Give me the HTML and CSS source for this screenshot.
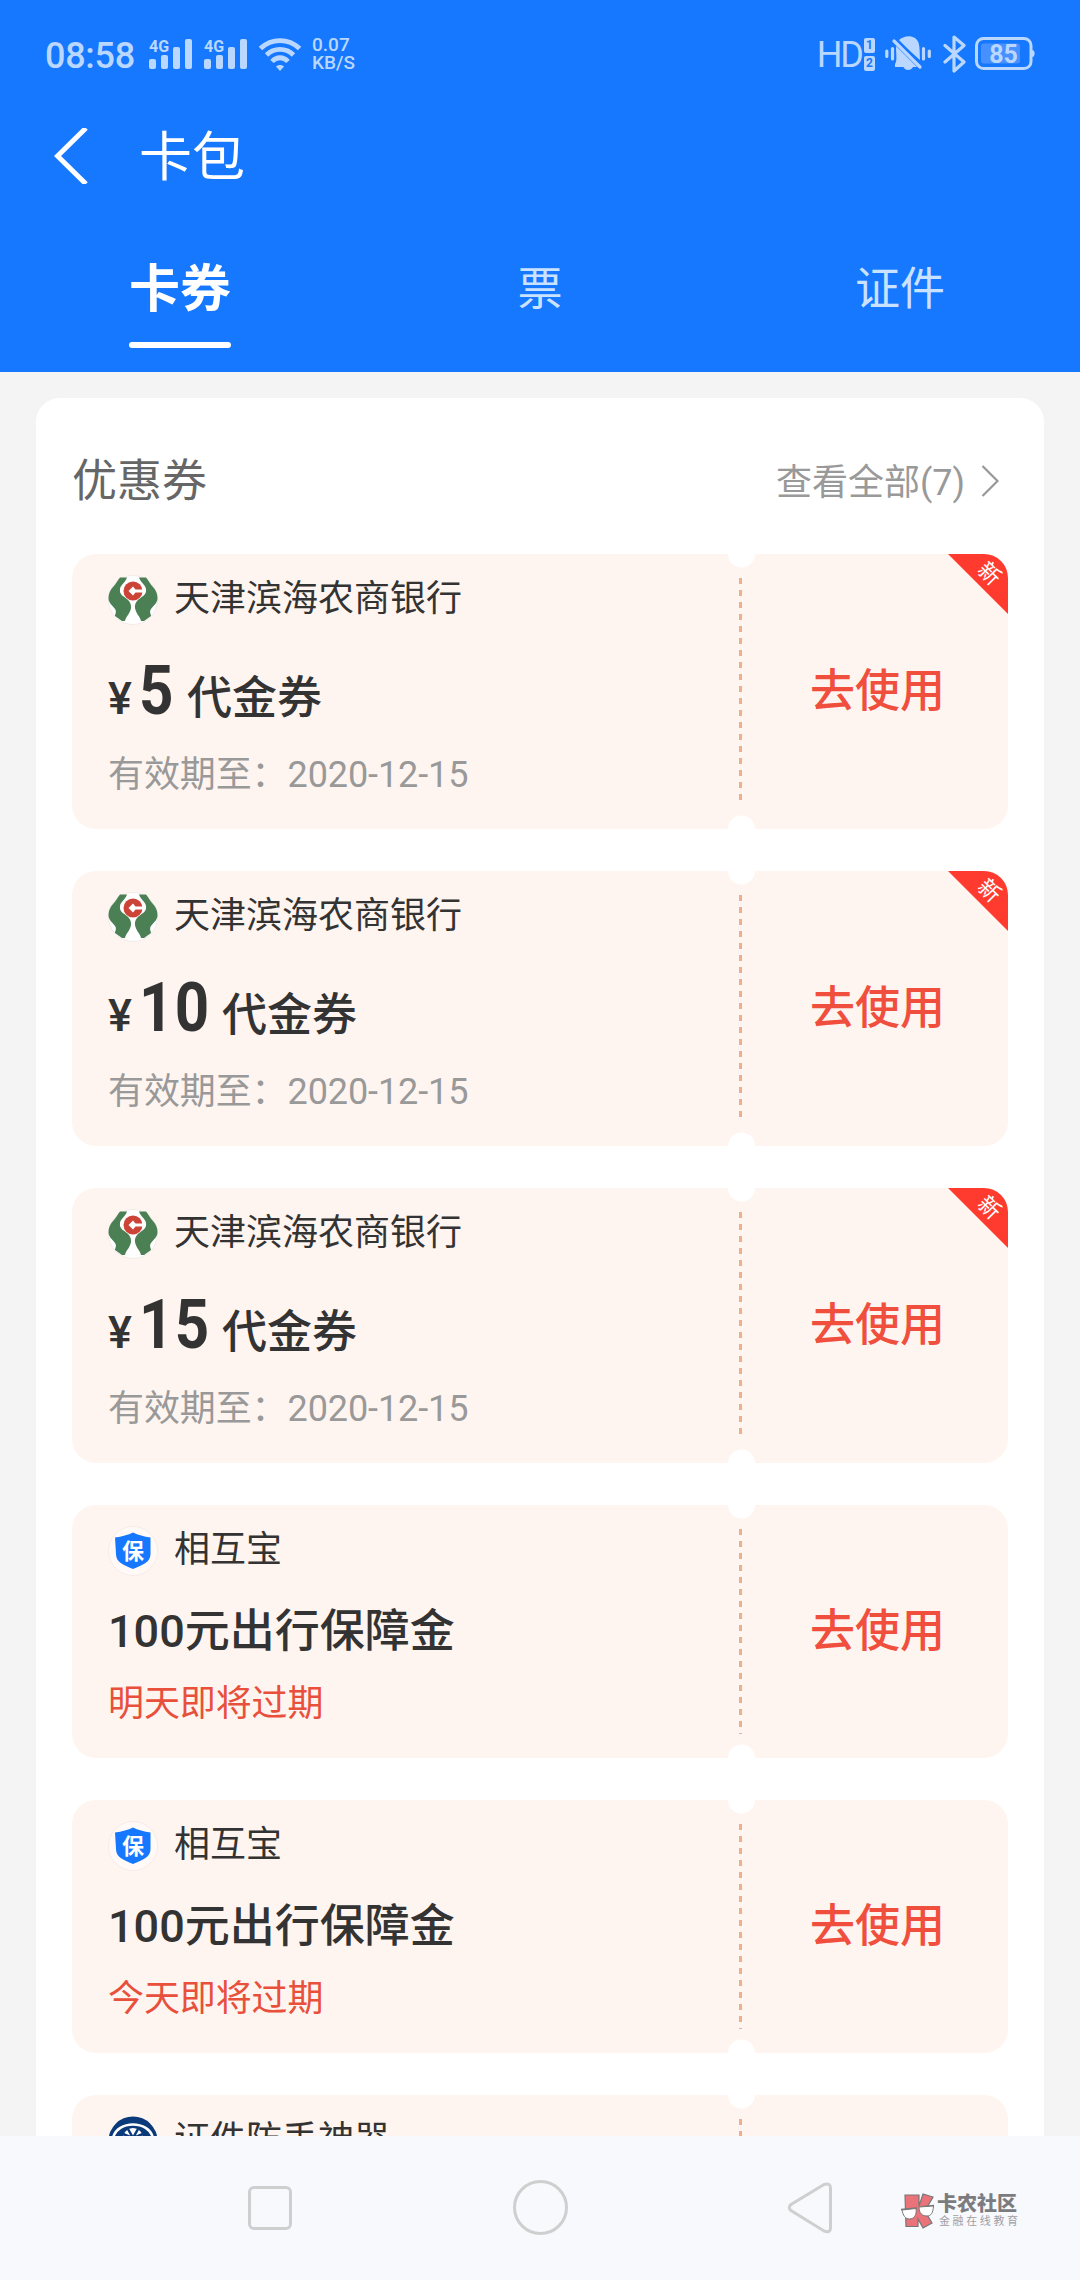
FILE: index.html
```
<!DOCTYPE html>
<html lang="zh-CN">
<head>
    <meta charset="UTF-8">
    <meta name="viewport" content="width=device-width, initial-scale=1.0">
    <title>卡包</title>
    <link rel="stylesheet" href="styles.css">
</head>
<body>
    <!-- shared icons -->
    <svg class="defs" width="0" height="0">
        <symbol id="bank" viewBox="0 0 50 50">
            <circle cx="25" cy="25" r="24.5" fill="#fff" stroke="#f1ebe7"/>
            <path d="M19 2.5 L12 2.5 C9 6 8 9 5 12 C2 15 0.5 19 0.5 23 C0.5 28 4 30 7 34 C9 37 7 39 7 41 L14 46 L17 46 C18 41 22 39 23 33 C23.5 27 20 25 17 22.5 C13 20 11.5 18 12 14 C12.5 10 17 8 19 2.5Z" fill="#4b7f54"/>
            <path d="M31 2.5 L38 2.5 C41 6 42 9 45 12 C48 15 49.5 19 49.5 23 C49.5 28 46 30 43 34 C41 37 43 39 43 41 L36 46 L33 46 C32 41 28 39 27 33 C26.5 27 30 25 33 22.5 C37 20 38.5 18 38 14 C37.5 10 33 8 31 2.5Z" fill="#4b7f54"/>
            <circle cx="25" cy="16" r="9.5" fill="#cb4437"/>
            <path d="M25 11.5 L27.5 14.5 H35 V17.5 H27.5 L25 20.5 L20.5 16Z" fill="#fff"/>
        </symbol>
        <symbol id="shield" viewBox="0 0 50 50">
            <circle cx="25" cy="25" r="24.5" fill="#fffaf8" stroke="#f7ebe6"/>
            <path d="M25 6.5 C30 9 36 10.5 42.5 11.5 V28 C42.5 36 35 39 25 43 C15 39 8 36 8 28 L7 11.5 C14 10.5 20 9 25 6.5Z" fill="#1677ff"/>
            <text x="25" y="32.5" text-anchor="middle" class="shield-text">保</text>
        </symbol>
        <symbol id="globe" viewBox="0 0 50 50">
            <circle cx="25" cy="25" r="24.5" fill="#0b3a7a"/>
            <path d="M5 22 C9 4 41 4 45 22" fill="none" stroke="#fff" stroke-width="2.5"/>
            <circle cx="25" cy="22" r="10" fill="#fff"/>
            <path d="M25 22 L20 13 M25 22 L30 13 M25 22 L15 18 M25 22 L35 18" stroke="#0b3a7a" stroke-width="2.5"/>
        </symbol>
        <symbol id="signal" viewBox="0 0 44 34">
            <text x="0" y="14" class="signal-text">4G</text>
            <rect x="0" y="21" width="7" height="10" rx="2"/>
            <rect x="12" y="17" width="7" height="14" rx="2"/>
            <rect x="24" y="9" width="7" height="22" rx="2"/>
            <rect x="36" y="1" width="7" height="30" rx="2"/>
        </symbol>
    </svg>

    <header class="header">
        <div class="status">
            <div class="status-left">
                <span class="time">08:58</span>
                <svg class="signal" width="44" height="34"><use href="#signal"/></svg>
                <svg class="signal" width="44" height="34"><use href="#signal"/></svg>
                <svg class="wifi" width="42" height="34" viewBox="0 0 42 34">
                    <g fill="none" stroke="#b9d7ff" stroke-width="4.8">
                        <path d="M1.5 10.5 C12.5 0 29.5 0 40.5 10.5"/>
                        <path d="M7.5 17 C15 9.5 27 9.5 34.5 17"/>
                        <path d="M13 23.5 C17.5 18.5 24.5 18.5 29 23.5"/>
                    </g>
                    <path d="M21 33 L17 28.5 C19 26.5 23 26.5 25 28.5Z"/>
                </svg>
                <span class="speed"><span>0.07</span><span>KB/S</span></span>
            </div>
            <div class="status-right">
                <span class="hd">HD</span>
                <span class="sims"><i>1</i><i>2</i></span>
                <svg class="bell" width="46" height="36" viewBox="0 0 46 36">
                    <path d="M13 5 C19 -1 28 -1 32 4 C35 8 34.5 13 35 24Z"/>
                    <path d="M11 10 L32 31 H28 C26 35 20 35 18.5 31 H10 V28 C12.5 25 11 18 11 10Z"/>
                    <path d="M9 5 L35 31 M1.8 15 V20.5 M7.5 12.5 V23 M38.5 12.5 V23 M44.3 15 V20.5" fill="none" stroke="#b9d7ff" stroke-width="3.2" stroke-linecap="round"/>
                    <path d="M13 4.5 L36 27.5" stroke="#1677ff" stroke-width="2"/>
                </svg>
                <svg class="bluetooth" width="24" height="38" viewBox="0 0 24 38">
                    <path d="M2 10.5 L21 27 L11 36 V2 L21 10.5 L2 27" fill="none" stroke="#b9d7ff" stroke-width="3.2" stroke-linejoin="round" stroke-linecap="round"/>
                </svg>
                <svg class="battery" width="60" height="34" viewBox="0 0 60 34">
                    <rect x="1.5" y="1.5" width="54.5" height="30" rx="7" fill="none" stroke="#b9d7ff" stroke-width="3"/>
                    <rect x="6" y="6.5" width="39" height="20" rx="3" fill="#4690ff"/>
                    <path d="M57 13 C60.5 13 60.5 20 57 20Z"/>
                    <text x="28.5" y="25.5" text-anchor="middle" class="battery-text">85</text>
                </svg>
            </div>
        </div>

        <div class="titlebar">
            <svg width="34" height="56" viewBox="0 0 34 56">
                <path d="M32 0 L3.5 28 L32 56" fill="none" stroke="#fff" stroke-width="5"/>
            </svg>
            <h1>卡包</h1>
        </div>

        <nav class="tabs">
            <a class="tab active">卡券</a>
            <a class="tab">票</a>
            <a class="tab">证件</a>
        </nav>
    </header>

    <main class="content">
        <section class="panel">
            <div class="panel-head">
                <h2>优惠券</h2>
                <a class="more">查看全部(7)
                    <svg width="19" height="32" viewBox="0 0 19 32">
                        <path d="M1.5 1 L16.5 16 L1.5 31" fill="none" stroke="#999" stroke-width="2.2"/>
                    </svg>
                </a>
            </div>

            <div class="coupon">
                <div class="info">
                    <div class="shop"><svg width="50" height="50"><use href="#bank"/></svg><span>天津滨海农商银行</span></div>
                    <div class="amount"><span class="yen">¥</span><span class="num">5</span><span>代金券</span></div>
                    <div class="expire">有效期至：2020-12-15</div>
                </div>
                <div class="divider"></div>
                <div class="use">去使用</div>
                <div class="ribbon"><span>新</span></div>
            </div>

            <div class="coupon">
                <div class="info">
                    <div class="shop"><svg width="50" height="50"><use href="#bank"/></svg><span>天津滨海农商银行</span></div>
                    <div class="amount"><span class="yen">¥</span><span class="num two">10</span><span>代金券</span></div>
                    <div class="expire">有效期至：2020-12-15</div>
                </div>
                <div class="divider"></div>
                <div class="use">去使用</div>
                <div class="ribbon"><span>新</span></div>
            </div>

            <div class="coupon">
                <div class="info">
                    <div class="shop"><svg width="50" height="50"><use href="#bank"/></svg><span>天津滨海农商银行</span></div>
                    <div class="amount"><span class="yen">¥</span><span class="num two">15</span><span>代金券</span></div>
                    <div class="expire">有效期至：2020-12-15</div>
                </div>
                <div class="divider"></div>
                <div class="use">去使用</div>
                <div class="ribbon"><span>新</span></div>
            </div>

            <div class="coupon small">
                <div class="info">
                    <div class="shop"><svg width="50" height="50"><use href="#shield"/></svg><span>相互宝</span></div>
                    <div class="amount">100元出行保障金</div>
                    <div class="expire soon">明天即将过期</div>
                </div>
                <div class="divider"></div>
                <div class="use">去使用</div>
            </div>

            <div class="coupon small">
                <div class="info">
                    <div class="shop"><svg width="50" height="50"><use href="#shield"/></svg><span>相互宝</span></div>
                    <div class="amount">100元出行保障金</div>
                    <div class="expire soon">今天即将过期</div>
                </div>
                <div class="divider"></div>
                <div class="use">去使用</div>
            </div>

            <div class="coupon small">
                <div class="info">
                    <div class="shop"><svg width="50" height="50"><use href="#globe"/></svg><span>证件防丢神器</span></div>
                </div>
                <div class="divider"></div>
                <div class="use"></div>
            </div>
        </section>
    </main>

    <footer class="navbar">
        <div class="nav-item"><span class="nav-square"></span></div>
        <div class="nav-item"><span class="nav-circle"></span></div>
        <div class="nav-item">
            <svg width="46" height="52" viewBox="0 0 46 52">
                <path d="M37 2.5 L4 22.5 Q0.5 25.5 4 28.5 L37 49 Q43.5 51.5 43.5 45.5 V6 Q43.5 0.5 37 2.5Z" fill="none" stroke="#cfcfcf" stroke-width="3"/>
            </svg>
        </div>
        <div class="watermark">
            <svg width="35" height="36" viewBox="0 0 35 36">
                <path d="M5 2 H19 V13 L23 1 L33 4 L25 18 L32 30 L23 35 L18 26 V33.5 H6Z" fill="#ea7279" stroke="#777" stroke-width="1.2"/>
                <path d="M1 16.5 L17 15 M19 14 L34 12.5" stroke="#777" stroke-width="1.5"/>
                <path d="M2 17 L16 15.5 C17 22 14 26 9.5 26 C5 26 3 22 2 17Z M19 14 L33.5 13 C33 20 31 23 27 23 C22 23 19 20 19 14Z" fill="#fff" stroke="#777"/>
            </svg>
            <div>
                <div class="wm-name">卡农社区</div>
                <div class="wm-sub">金融在线教育</div>
            </div>
        </div>
    </footer>
</body>
</html>
```
FILE: styles.css
```
* {
    box-sizing: border-box;
}
body {
    margin: 0;
    height: 2280px;
    display: flex;
    flex-direction: column;
    overflow: hidden;
    font-family: Roboto, "Noto Sans CJK SC", sans-serif;
    color: #333;
    background: #f4f4f4;
}
svg {
    display: block;
    flex: none;
}
.defs {
    display: none;
}

/* header */
.header {
    height: 372px;
    flex: none;
    background: #1677ff;
    color: #fff;
}
.status {
    height: 108px;
    padding: 0 45px;
    display: flex;
    justify-content: space-between;
    color: #b9d7ff;
    fill: #b9d7ff;
}
.status-left, .status-right {
    display: flex;
    align-items: center;
}
.time {
    width: 104px;
    font-size: 36px;
    font-weight: 500;
    letter-spacing: -0.3px;
    line-height: 108px;
    padding-top: 3px;
}
.signal {
    margin-right: 11px;
    margin-top: 2px;
}
.signal-text {
    font-size: 16px;
    font-weight: 700;
}
.wifi {
    margin-top: 1px;
}
.speed {
    display: flex;
    flex-direction: column;
    margin-left: 11px;
    font-size: 19px;
    font-weight: 500;
    line-height: 18px;
}
.hd {
    font-size: 36px;
    letter-spacing: -2px;
    margin-top: 1px;
}
.sims {
    display: flex;
    flex-direction: column;
    gap: 3px;
    margin: 0 10px 0 2px;
}
.sims i {
    width: 11px;
    height: 15px;
    border-radius: 2px;
    background: #b9d7ff;
    color: #1677ff;
    font-size: 12px;
    font-weight: 700;
    font-style: normal;
    line-height: 15px;
    text-align: center;
}
.bell {
    margin-right: 12px;
}
.bluetooth {
    margin-right: 8px;
}
.battery-text {
    font-size: 25px;
    font-weight: 700;
}
.titlebar {
    height: 96px;
    padding-left: 54px;
    display: flex;
    align-items: center;
}
.titlebar h1 {
    margin: 5px 0 0 51px;
    font-size: 53px;
    font-weight: 400;
    line-height: 91px;
}
.tabs {
    display: grid;
    grid-template-columns: 1fr 1fr 1fr;
    height: 168px;
}
.tab {
    display: flex;
    flex-direction: column;
    align-items: center;
    font-size: 45px;
    line-height: 60px;
    padding-top: 56px;
    color: #c9e2ff;
}
.tab.active {
    font-size: 51px;
    font-weight: 700;
    color: #fff;
}
.tab.active::after {
    content: "";
    width: 102px;
    height: 6px;
    margin-top: 22px;
    border-radius: 3px;
    background: #fff;
}

/* coupon list */
.content {
    flex: 1;
    min-height: 0;
    overflow: hidden;
    padding: 26px 36px 0;
}
.panel {
    padding: 0 36px 42px;
    border-radius: 24px 24px 0 0;
    background: #fff;
    display: flex;
    flex-direction: column;
    gap: 42px;
}
.panel-head {
    height: 114px;
    padding: 48px 8px 0 0;
    display: flex;
    align-items: center;
    justify-content: space-between;
}
.panel-head h2 {
    margin: 0 0 3px;
    font-size: 45px;
    font-weight: 400;
    color: #666;
}
.more {
    display: flex;
    align-items: center;
    gap: 16px;
    font-size: 36px;
    color: #999;
}
.more svg {
    margin-top: 3px;
}
.coupon {
    position: relative;
    display: flex;
    height: 275px;
    border-radius: 24px;
    background: #fff5f0;
}
.coupon.small {
    height: 253px;
}
.info {
    width: 656px;
    padding: 21px 0 0 36px;
}
.shop {
    display: flex;
    height: 50px;
    font-size: 36px;
    line-height: 48px;
}
.shop span {
    margin-left: 16px;
}
.amount {
    display: flex;
    align-items: baseline;
    height: 72px;
    margin-top: 30px;
    font-size: 45px;
    font-weight: 500;
    line-height: 72px;
}
.yen {
    width: 31px;
}
.num {
    width: 48px;
    font-size: 69px;
    font-weight: 700;
    letter-spacing: 1.5px;
    transform: scaleX(0.87);
    transform-origin: left;
}
.num.two {
    width: 83px;
}
.expire {
    margin-top: 23px;
    font-size: 36px;
    letter-spacing: -0.1px;
    line-height: 50px;
    color: #999;
}
.expire.soon {
    color: #e8503c;
}
.small .amount {
    margin-top: 20px;
}
.small .expire {
    margin-top: 11px;
}
/* perforated line with a notch at both ends */
.divider {
    width: 27px;
    background:
        radial-gradient(circle at 50% 0, #fff 13px, transparent 14px),
        radial-gradient(circle at 50% 100%, #fff 13px, transparent 14px);
}
.divider::before {
    content: "";
    display: block;
    width: 3px;
    height: calc(100% - 48px);
    margin: 24px 0 0 11px;
    background: repeating-linear-gradient(#edaf8e 0 6px, transparent 6px 12px);
}
.use {
    flex: 1;
    display: flex;
    align-items: center;
    justify-content: center;
    padding: 0 8px 8px 0;
    font-size: 45px;
    font-weight: 500;
    color: #f04f3e;
}
.ribbon {
    position: absolute;
    top: 0;
    right: 0;
    width: 60px;
    height: 60px;
    border-radius: 0 24px 0 0;
    background: #ff3b30;
    clip-path: polygon(0 0, 100% 0, 100% 100%);
    color: #fff;
    font-size: 22px;
}
.ribbon span {
    display: block;
    width: 24px;
    line-height: 24px;
    margin: 8px 0 0 29px;
    text-align: center;
    transform: rotate(45deg);
}
.shield-text {
    font-size: 22px;
    font-weight: 700;
    fill: #fff;
}

/* system navigation */
.navbar {
    position: relative;
    flex: none;
    height: 144px;
    padding: 0 135px;
    display: grid;
    grid-template-columns: 1fr 1fr 1fr;
    background: #f8f9fd;
}
.nav-item {
    display: flex;
    align-items: center;
    justify-content: center;
    height: 143px;
}
.nav-square {
    width: 44px;
    height: 44px;
    border: 3px solid #cfcfcf;
    border-radius: 6px;
}
.nav-circle {
    width: 55px;
    height: 55px;
    border: 3px solid #cfcfcf;
    border-radius: 50%;
}
.watermark {
    position: absolute;
    left: 900px;
    top: 57px;
    display: flex;
    color: #7c7c80;
}
.wm-name {
    margin-left: 2px;
    font-size: 20px;
    font-weight: 900;
    line-height: 22px;
}
.wm-sub {
    margin-left: 4px;
    font-size: 11px;
    letter-spacing: 2.6px;
    line-height: 13px;
    color: #a0a0a4;
}
```
